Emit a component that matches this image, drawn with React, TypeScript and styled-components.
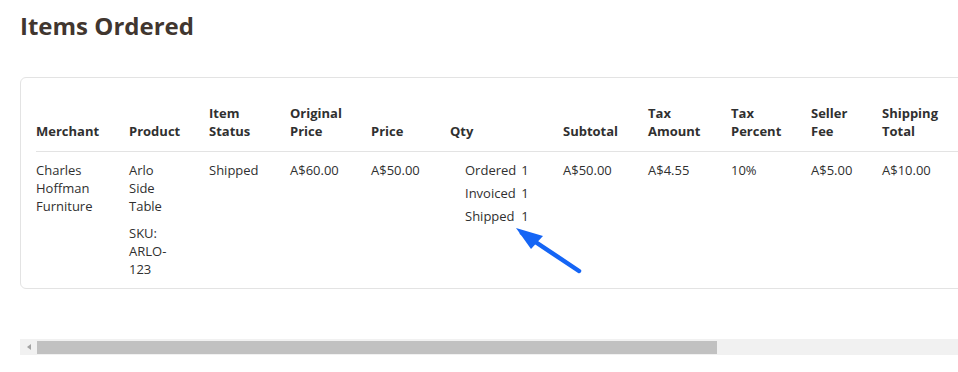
import React from 'react';
import styled, { createGlobalStyle } from 'styled-components';

const GlobalStyle = createGlobalStyle`
  html, body {
    margin: 0;
    padding: 0;
    background: #ffffff;
    overflow: hidden;
  }
  body {
    font-family: 'Open Sans', 'Liberation Sans', sans-serif;
    color: #303030;
  }
`;

const Page = styled.div`
  position: relative;
  width: 958px;
  height: 372px;
  overflow: hidden;
  padding: 11px 0 0 20px;
  box-sizing: border-box;
`;

const Title = styled.h1`
  margin: 0 0 37px;
  font-size: 24px;
  line-height: 29px;
  font-weight: 700;
  color: #41362f;
`;

const Card = styled.div`
  width: 1000px;
  border: 1px solid #e3e3e3;
  border-radius: 6px;
  padding: 0 0 0 15px;
  box-sizing: border-box;
`;

const Table = styled.table`
  border-collapse: collapse;
  table-layout: fixed;
  font-size: 13px;
  line-height: 18px;
`;

const HeadCell = styled.th<{ w: number }>`
  width: ${p => p.w}px;
  padding: 26px 0 11px;
  text-align: left;
  vertical-align: bottom;
  font-weight: 700;
  color: #303030;
`;

const HeadRow = styled.tr`
  border-bottom: 1px solid #e3e3e3;
`;

const Cell = styled.td`
  padding: 9px 0 10px;
  vertical-align: top;
  color: #303030;
`;

const Sku = styled.div`
  margin-top: 9px;
`;

const QtyGrid = styled.div`
  display: grid;
  grid-template-columns: auto auto;
  justify-content: start;
  column-gap: 5px;
  row-gap: 5px;
  padding-left: 15px;
`;

const ScrollTrack = styled.div`
  display: flex;
  align-items: center;
  margin-top: 50px;
  width: 1000px;
  height: 16px;
  background: #f1f1f1;
`;

const ScrollArrow = styled.div`
  width: 17px;
  display: flex;
  justify-content: center;
  &::before {
    content: '';
    border-style: solid;
    border-width: 3.5px 4px 3.5px 0;
    border-color: transparent #a3a3a3 transparent transparent;
  }
`;

const ScrollThumb = styled.div`
  width: 680px;
  height: 13px;
  background: #c1c1c1;
`;

const Pointer = styled.svg`
  position: absolute;
  left: 510px;
  top: 224px;
`;

const columns: [string, number][] = [
  ['Merchant', 93],
  ['Product', 80],
  ['Item Status', 81],
  ['Original Price', 81],
  ['Price', 79],
  ['Qty', 113],
  ['Subtotal', 85],
  ['Tax Amount', 83],
  ['Tax Percent', 80],
  ['Seller Fee', 71],
  ['Shipping Total', 110],
];

const qty: [string, number][] = [
  ['Ordered', 1],
  ['Invoiced', 1],
  ['Shipped', 1],
];

const HeadLabel: React.FC<{ text: string }> = ({ text }) => {
  const words = text.split(' ');
  return (
    <>
      {words.map((w, i) => (
        <React.Fragment key={i}>
          {i > 0 && <br />}
          {w}
        </React.Fragment>
      ))}
    </>
  );
};

export default function App() {
  return (
    <>
      <GlobalStyle />
      <Page>
        <Title>Items Ordered</Title>
        <Card>
          <Table>
            <thead>
              <HeadRow>
                {columns.map(([label, w]) => (
                  <HeadCell key={label} w={w}>
                    <HeadLabel text={label} />
                  </HeadCell>
                ))}
              </HeadRow>
            </thead>
            <tbody>
              <tr>
                <Cell>
                  Charles
                  <br />
                  Hoffman
                  <br />
                  Furniture
                </Cell>
                <Cell>
                  Arlo
                  <br />
                  Side
                  <br />
                  Table
                  <Sku>
                    SKU:
                    <br />
                    ARLO-
                    <br />
                    123
                  </Sku>
                </Cell>
                <Cell>Shipped</Cell>
                <Cell>A$60.00</Cell>
                <Cell>A$50.00</Cell>
                <Cell>
                  <QtyGrid>
                    {qty.map(([label, n]) => (
                      <React.Fragment key={label}>
                        <span>{label}</span>
                        <span>{n}</span>
                      </React.Fragment>
                    ))}
                  </QtyGrid>
                </Cell>
                <Cell>A$50.00</Cell>
                <Cell>A$4.55</Cell>
                <Cell>10%</Cell>
                <Cell>A$5.00</Cell>
                <Cell>A$10.00</Cell>
              </tr>
            </tbody>
          </Table>
        </Card>
        <ScrollTrack>
          <ScrollArrow />
          <ScrollThumb />
        </ScrollTrack>
        <Pointer width="80" height="56" viewBox="0 0 80 56">
          <line x1="69" y1="47" x2="12" y2="9" stroke="#1565f5" strokeWidth="4.5" strokeLinecap="round" />
          <polygon points="6,4 33,12 21,25" fill="#1565f5" />
        </Pointer>
      </Page>
    </>
  );
}
